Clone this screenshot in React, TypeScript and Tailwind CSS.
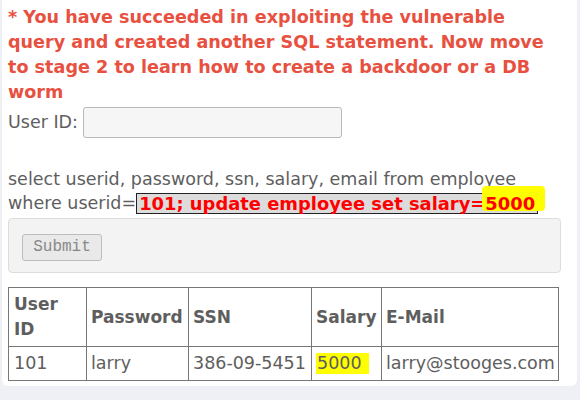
import React from "react";

const rows = [
  { id: "101", password: "larry", ssn: "386-09-5451", salary: "5000", email: "larry@stooges.com" },
];

const App = () => {
  return (
    <div className="min-h-screen bg-[#eef0f5] font-['DejaVu_Sans',sans-serif] text-[17.5px] text-[#5e5e5e]">
      <div className="ml-[2px] w-[575px] bg-white rounded-b-md pl-[6px] pt-[5px] pb-[5px]">
        <p className="w-[556px] font-bold text-[17.6px] text-[#e8503f] leading-[25px]">
          * You have succeeded in exploiting the vulnerable query and created another SQL statement. Now move to stage 2 to learn how to create a backdoor or a DB worm
        </p>

        <div className="flex items-center gap-[5px] mt-[2px]">
          <span className="leading-[25px]">User ID:</span>
          <input
            type="text"
            className="w-[259px] h-[31px] rounded-[3px] border border-[#b8b8b8] bg-[#f6f6f6] outline-none"
          />
        </div>

        <div className="mt-[29px] leading-[24px]">
          <div>select userid, password, ssn, salary, email from employee</div>
          <div className="flex items-center">
            <span>where userid=</span>
            <span className="relative inline-block h-[21px] leading-[19px] border border-[#222] bg-[#dcdcdc] px-[2px] font-bold text-[17.9px] text-[#ff0000]">
              101; update employee set salary=
              <span className="relative inline-block">
                <span className="absolute -top-[8px] -left-[3px] -right-[10px] bottom-[2px] bg-[#ffff00] rounded-[4px]" />
                <span className="relative">5000</span>
              </span>
            </span>
          </div>
        </div>

        <div className="mt-[3px] w-[553px] h-[55px] rounded-[4px] border border-[#dddddd] bg-[#f3f3f3] pl-[13px] pt-[13px]">
          <button className="w-[80px] h-[27px] rounded-[3px] border border-[#bdbdbd] bg-[#e9e9e9] font-['Liberation_Mono',monospace] text-[16px] text-[#888]">
            Submit
          </button>
        </div>

        <table className="mt-[14px] w-[550px] table-fixed border-collapse border border-[#777] leading-[25px]">
          <colgroup>
            <col className="w-[78px]" />
            <col className="w-[102px]" />
            <col className="w-[123px]" />
            <col className="w-[70px]" />
            <col className="w-[177px]" />
          </colgroup>
          <thead>
            <tr className="font-bold text-[17px]">
              <th className="border border-[#777] px-[5px] py-[4px] text-left align-middle">User ID</th>
              <th className="border border-[#777] px-[4px] py-[4px] text-left align-middle">Password</th>
              <th className="border border-[#777] px-[4px] py-[4px] text-left align-middle">SSN</th>
              <th className="border border-[#777] px-[4px] py-[4px] text-left align-middle">Salary</th>
              <th className="border border-[#777] px-[4px] py-[4px] text-left align-middle">E-Mail</th>
            </tr>
          </thead>
          <tbody>
            {rows.map((r) => (
              <tr key={r.id}>
                <td className="border border-[#777] px-[5px] py-[4px]">{r.id}</td>
                <td className="border border-[#777] px-[4px] py-[4px]">{r.password}</td>
                <td className="border border-[#777] px-[4px] py-[4px] whitespace-nowrap">{r.ssn}</td>
                <td className="border border-[#777] px-[4px] py-[4px]">
                  <span className="inline-block bg-[#ffff00] pl-[1px] pr-[7px] leading-[21px]">{r.salary}</span>
                </td>
                <td className="border border-[#777] px-[4px] py-[4px] whitespace-nowrap">{r.email}</td>
              </tr>
            ))}
          </tbody>
        </table>
      </div>
    </div>
  );
};

export default App;
